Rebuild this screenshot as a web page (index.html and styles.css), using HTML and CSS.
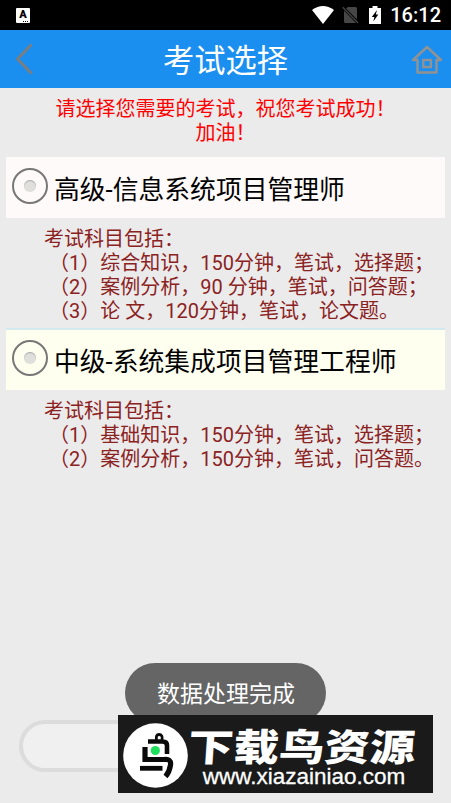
FILE: index.html
```html
<!DOCTYPE html>
<html lang="zh-CN">
<head>
    <meta charset="UTF-8">
    <meta name="viewport" content="width=device-width, initial-scale=1.0">
    <title>考试选择</title>
    <link rel="stylesheet" href="styles.css">
</head>
<body>
    <!-- Status Bar -->
    <div class="status-bar">
        <div class="ime-icon">A</div>
        <div class="status-right">
            <svg class="wifi-icon" width="22" height="18" viewBox="0 0 22 18">
                <path d="M0 4 Q11 -4 22 4 L11 18 Z" fill="#fff"/>
            </svg>
            <svg class="sim-icon" width="17" height="18" viewBox="0 0 17 18">
                <path d="M6 1 H13.5 Q15 1 15 2.5 V13.5 L4 2.5 Z M2 4.5 L14 17 H3.5 Q2 17 2 15.5 Z" fill="#464646"/>
                <path d="M0.7 1.3 L16 17" stroke="#464646" stroke-width="1.3"/>
            </svg>
            <svg class="battery-icon" width="12" height="18" viewBox="0 0 12 18">
                <path d="M3.5 0 H8.5 V2 H12 V18 H0 V2 H3.5 Z" fill="#fff"/>
                <path d="M8 4 L2.8 11 H5.4 L4.3 15.5 L9.3 8.6 H6.8 Z" fill="#000"/>
            </svg>
            <span class="clock">16:12</span>
        </div>
    </div>

    <!-- Header -->
    <header class="header">
        <svg class="back-icon" width="18" height="32" viewBox="0 0 18 32">
            <path d="M16.5 1.5 L2.5 16 L16.5 30.5" fill="none" stroke="#7d7d7d" stroke-width="2.8"/>
        </svg>
        <h1 class="title">考试选择</h1>
        <svg class="home-icon" width="32" height="30" viewBox="0 0 32 30">
            <path d="M6.5 15 H2 L16 2 L30 15 H25.5 V27.5 H6.5 Z" fill="none" stroke="#929292" stroke-width="2.4" stroke-linejoin="round"/>
            <rect x="12.3" y="15" width="7.6" height="7" fill="none" stroke="#929292" stroke-width="2.4"/>
        </svg>
    </header>

    <!-- Exam List -->
    <main class="content">
        <p class="notice">请选择您需要的考试，祝您考试成功！<br>加油！</p>

        <div class="option senior">
            <span class="radio"></span>
            <span class="option-name">高级-信息系统项目管理师</span>
        </div>
        <div class="subjects">
            <p>考试科目包括：</p>
            <p> （1）综合知识，150分钟，笔试，选择题；</p>
            <p> （2）案例分析，90 分钟，笔试，问答题；</p>
            <p> （3）论 文，120分钟，笔试，论文题。</p>
        </div>

        <div class="option middle">
            <span class="radio"></span>
            <span class="option-name">中级-系统集成项目管理工程师</span>
        </div>
        <div class="subjects">
            <p>考试科目包括：</p>
            <p> （1）基础知识，150分钟，笔试，选择题；</p>
            <p> （2）案例分析，150分钟，笔试，问答题。</p>
        </div>
    </main>

    <button class="submit-btn"></button>

    <!-- Toast -->
    <div class="toast">数据处理完成</div>

    <!-- Site Banner -->
    <div class="banner">
        <svg class="banner-logo" width="65" height="65" viewBox="0 0 65 65">
            <circle cx="32.5" cy="32.5" r="32.3" fill="#fff"/>
            <g fill="none" stroke="#0a0a0a">
                <path d="M33.5 17 Q32.5 11.5 36 11.5 Q40 11.5 39 17" stroke-width="2.8"/>
                <path d="M25 18.5 H39.5 Q44 18.5 44 22.5 V31" stroke-width="4.6"/>
                <path d="M22 24 V36.5 H41 Q48.5 35.5 47.5 42 Q46.5 49 42.5 53.5" stroke-width="5.2"/>
                <path d="M17 45.3 H39.5" stroke-width="4.8"/>
            </g>
            <circle cx="32.3" cy="27.5" r="4.6" fill="#1fe05c"/>
        </svg>
        <div class="banner-text">
            <div class="banner-name">下载鸟资源</div>
            <div class="banner-url">www.xiazainiao.com</div>
        </div>
    </div>
</body>
</html>
```
FILE: styles.css
```css
/* Global Styles */
* {
    box-sizing: border-box;
}

body {
    margin: 0;
    height: 803px;
    display: flex;
    flex-direction: column;
    position: relative;
    overflow: hidden;
    background-color: #ebebeb;
    font-family: Roboto, "Noto Sans CJK SC", sans-serif;
}

p {
    margin: 0;
}

svg {
    display: block;
    flex-shrink: 0;
}

/* Status Bar */
.status-bar {
    height: 30px;
    flex-shrink: 0;
    display: flex;
    justify-content: space-between;
    align-items: center;
    padding: 0 10px 0 16px;
    background: #000;
    color: #fff;
}

.ime-icon {
    position: relative;
    width: 14px;
    height: 15px;
    border-radius: 1px;
    background: #fff;
    color: #000;
    font-size: 11px;
    font-weight: 900;
    line-height: 13px;
    text-align: center;
}

/* Dots under the letter */
.ime-icon::after {
    content: "";
    position: absolute;
    right: 2px;
    bottom: 1px;
    width: 5px;
    border-bottom: 1px dotted #000;
}

.status-right {
    display: flex;
    align-items: center;
}

.sim-icon {
    margin-left: 8px;
}

.battery-icon {
    margin-left: 10px;
}

.clock {
    margin-left: 9px;
    padding-top: 1px;
    font-size: 20px;
    font-weight: 500;
    line-height: 29px;
}

/* Header */
.header {
    height: 58px;
    flex-shrink: 0;
    display: flex;
    justify-content: space-between;
    align-items: center;
    padding: 0 8px 0 15px;
    background: #1b8fef;
}

.home-icon {
    margin-top: 2px;
}

.title {
    margin: 0;
    padding: 5px 0 0 7px;
    font-size: 31.3px;
    font-weight: 400;
    line-height: 53px;
    color: #fff;
}

/* Exam List */
.content {
    padding: 9px 6px 0;
}

.notice {
    margin-bottom: 12px;
    font-size: 20px;
    line-height: 24px;
    text-align: center;
    color: #f00;
}

.option {
    height: 61px;
    display: flex;
    align-items: center;
    padding-left: 6px;
}

.senior {
    background: #fffafa;
}

.middle {
    height: 62px;
    padding-bottom: 2px;
    border-top: 2px solid #d3e9f0;
    background: #fffff0;
}

.radio {
    width: 36px;
    height: 36px;
    margin: -3px 6px 0 0;
    display: flex;
    align-items: center;
    justify-content: center;
    border: 2px solid #777;
    border-radius: 50%;
}

.radio::before {
    content: "";
    width: 12px;
    height: 12px;
    border-radius: 50%;
    background: #dfdfdc;
    box-shadow: inset 0 1px 1px #aaa;
}

.option-name {
    font-size: 25.8px;
    color: #000;
}

.subjects {
    padding: 9px 0 5px 38px;
    font-size: 20px;
    line-height: 24px;
    color: #8b2222;
}

.subjects p {
    white-space: pre;
}

/* Submit Button */
.submit-btn {
    width: 413px;
    height: 52px;
    margin: auto 19px 31px;
    flex-shrink: 0;
    border: 4px solid #dcdcdc;
    border-radius: 26px;
    background: #f0f0f0;
}

/* Toast */
.toast {
    position: absolute;
    left: 125px;
    top: 663px;
    width: 201px;
    height: 60px;
    padding: 2px 0 0 1px;
    border-radius: 30px;
    background: #656565;
    color: #fff;
    font-size: 23px;
    line-height: 60px;
    text-align: center;
}

/* Site Banner */
.banner {
    position: absolute;
    left: 118px;
    top: 715px;
    width: 315px;
    height: 78px;
    display: flex;
    align-items: center;
    padding-left: 5px;
    background: #1a1a1a;
    color: #fff;
}

.banner-logo {
    margin-top: 3px;
}

.banner-text {
    width: 228px;
    text-align: center;
    white-space: nowrap;
}

.banner-name {
    height: 38px;
    margin-top: 6px;
    font-family: "Noto Sans CJK SC", sans-serif;
    font-size: 45.4px;
    font-weight: 900;
    line-height: 38px;
    transform: skewX(-4deg) scaleY(0.83);
}

.banner-url {
    margin-top: 2px;
    padding-left: 4px;
    font-family: "Liberation Sans", sans-serif;
    font-size: 22.5px;
    line-height: 24px;
    -webkit-text-stroke: 0.3px #fff;
}
```
